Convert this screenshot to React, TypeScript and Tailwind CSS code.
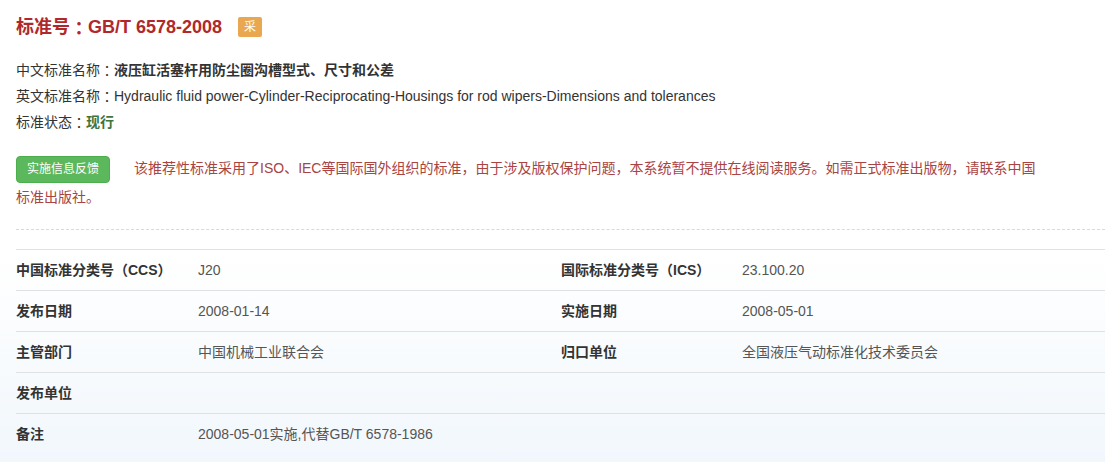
const font = '[font-family:"Liberation_Sans","Noto_Sans_CJK_SC",sans-serif]';

function Colon() {
  return <span className='[font-family:"Noto_Sans_CJK_TC",sans-serif]'>：</span>;
}

const rows: [string, string, string?, string?][] = [
  ["中国标准分类号（CCS）", "J20", "国际标准分类号（ICS）", "23.100.20"],
  ["发布日期", "2008-01-14", "实施日期", "2008-05-01"],
  ["主管部门", "中国机械工业联合会", "归口单位", "全国液压气动标准化技术委员会"],
  ["发布单位", ""],
  ["备注", "2008-05-01实施,代替GB/T 6578-1986"],
];

export default function App() {
  return (
    <div
      className={`min-h-[462px] bg-gradient-to-b from-white via-white via-55% to-[#f1f7fc] pl-4 pt-[14px] text-[14px] text-[#333] ${font}`}
    >
      <h1 className="flex h-[26px] items-center text-[18px] font-bold leading-[26px] text-[#b0282b]">
        标准号<Colon />GB/T 6578-2008
        <span className="ml-4 flex h-5 w-6 items-center justify-center rounded-[2px] bg-[#e9a84f] text-[12px] font-normal text-white">
          采
        </span>
      </h1>

      <div className="mt-[17px] leading-[26px]">
        <p className="flex h-[26px] items-center">
          中文标准名称<Colon /><b className="font-bold">液压缸活塞杆用防尘圈沟槽型式、尺寸和公差</b>
        </p>
        <p className="flex h-[26px] items-center">
          英文标准名称<Colon />Hydraulic fluid power-Cylinder-Reciprocating-Housings for rod wipers-Dimensions and tolerances
        </p>
        <p className="flex h-[26px] items-center">
          标准状态<Colon /><span className="font-bold text-[#3c763d]">现行</span>
        </p>
      </div>

      <div className="mt-[19px] w-[1028px] leading-[29px] text-[#a94442]">
        <span className="mr-6 inline-block h-[27px] rounded-[4px] border border-[#4cae4c] bg-[#5cb85c] px-[10px] align-middle text-[12px] leading-[25px] text-white">
          实施信息反馈
        </span>
        该推荐性标准采用了ISO、IEC等国际国外组织的标准，由于涉及版权保护问题，本系统暂不提供在线阅读服务。如需正式标准出版物，请联系中国标准出版社。
      </div>

      <div className="mt-[17px] border-t border-dashed border-[#d9d9d9]" />

      <div className="mt-[19px]">
        {rows.map(([l1, v1, l2, v2]) => (
          <div
            key={l1}
            className="grid h-[41px] grid-cols-[182px_363px_181px_1fr] items-center border-t border-[#e1e1e1]"
          >
            <div className="font-bold">{l1}</div>
            <div className="text-[#555]">{v1}</div>
            <div className="font-bold">{l2}</div>
            <div className="text-[#555]">{v2}</div>
          </div>
        ))}
      </div>
    </div>
  );
}
